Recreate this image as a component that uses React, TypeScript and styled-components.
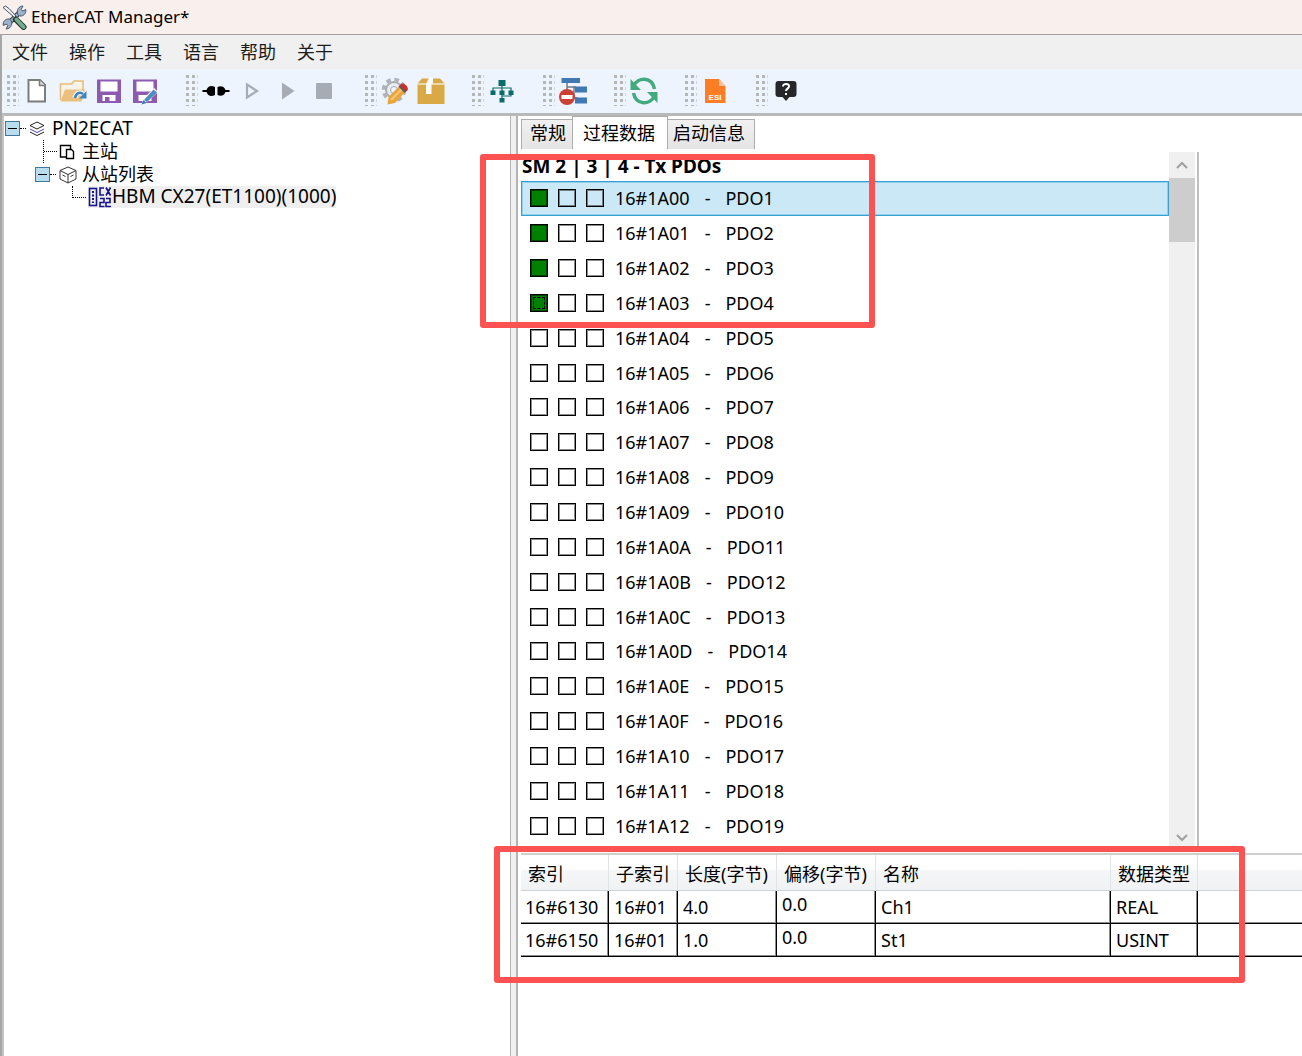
import React, { useState } from "react";
import styled, { createGlobalStyle, css } from "styled-components";

const GlobalStyle = createGlobalStyle`
  *, *::before, *::after { box-sizing: border-box; }
  body {
    margin: 0;
    background: #fff;
    color: #000;
    font-family: "Noto Sans", "Noto Sans CJK SC", sans-serif;
    font-size: 18px;
    line-height: 24px;
  }
  button, input { font: inherit; color: inherit; }
  button { margin: 0; padding: 0; border: 0; background: none; }
  h1, h2, ul { margin: 0; padding: 0; font-weight: 400; list-style: none; }
`;

const Window = styled.div`
  display: flex;
  flex-direction: column;
  min-height: 100vh;
`;

const TitleBar = styled.header`
  display: flex;
  align-items: center;
  gap: 4px;
  height: 34px;
  padding-left: 2px;
  background: #f9f0ee;
`;

const Title = styled.h1`
  font-size: 17px;
  line-height: 24px;
`;

const Frame = styled.div`
  display: flex;
  flex: 1;
  flex-direction: column;
  border-top: 1px solid #a0a0a0;
  border-left: 2px solid #a6a6a6;
`;

const MenuBar = styled.nav`
  display: flex;
  gap: 21px;
  height: 34px;
  padding-left: 10px;
  background: #f0f0f0;
`;

const MenuItem = styled.button`
  color: #1c1c1c;
`;

const Toolbar = styled.div`
  display: flex;
  gap: 22px;
  height: 44px;
  padding-left: 4px;
  background: #edf4fd;
`;

const ToolGroup = styled.div`
  display: flex;
  align-items: center;
`;

const ToolButton = styled.button`
  display: flex;
  align-items: center;
  justify-content: center;
  width: 36px;
  height: 36px;
`;

const Workspace = styled.main`
  display: flex;
  flex: 1;
  border-top: 3px solid #b9b9b9;
  border-left: 2px solid #c4c4c4;
`;

const TreePane = styled.nav`
  flex: 0 0 506px;
  padding: 1px 0 0 1px;
`;

const TreeRow = styled.li<{ $indent: number }>`
  display: flex;
  align-items: center;
  height: 23px;
  padding-left: ${(p) => p.$indent}px;
`;

const Expander = styled.button`
  display: flex;
  align-items: center;
  justify-content: center;
  width: 15px;
  height: 15px;
  border: 1px solid #3f789c;
  background: #b9dcee;
  &::before {
    content: "";
    width: 9px;
    height: 1px;
    background: #000;
  }
`;

const Dots = styled.span`
  width: 6px;
  margin-right: 3px;
  border-top: 1px dotted #000;
`;

const Elbow = styled.span<{ $through?: boolean }>`
  align-self: stretch;
  width: 14px;
  margin-right: 2px;
  ${(p) =>
    p.$through
      ? css`
          display: flex;
          align-items: center;
          border-left: 1px dotted #000;
          &::before {
            content: "";
            flex: 1;
            border-top: 1px dotted #000;
          }
        `
      : css`
          height: 12px;
          border-left: 1px dotted #000;
          border-bottom: 1px dotted #000;
        `}
`;

const TreeIcon = styled.span<{ $width: number }>`
  display: flex;
  align-items: center;
  justify-content: center;
  width: ${(p) => p.$width}px;
`;

const TreeLabel = styled.span<{ $gap?: number; $latin?: boolean }>`
  padding: 0 0 2px ${(p) => p.$gap ?? 0}px;
  font-size: ${(p) => (p.$latin ? 19 : 18)}px;
  white-space: nowrap;
`;

const SelectedNode = styled.span`
  display: flex;
  align-items: center;
  align-self: flex-start;
  height: 22px;
  background: #efefef;
`;

const Splitter = styled.div`
  flex: 0 0 8px;
  border: solid #b4b4b4;
  border-width: 0 2px 0 1px;
  background: #f0f0f0;
`;

const Detail = styled.section`
  position: relative;
  flex: 1;
  min-width: 0;
  padding-left: 3px;
`;

const TabList = styled.div`
  display: flex;
  align-items: flex-end;
  height: 33px;
`;

const Tab = styled.button<{ $active: boolean }>`
  height: ${(p) => (p.$active ? 33 : 30)}px;
  padding: ${(p) => (p.$active ? "0 12px 0 10px" : "0 6px 3px 8px")};
  border: solid #acacac;
  border-width: 1px 1px 0;
  background: ${(p) => (p.$active ? "#fff" : "linear-gradient(#f1f1f1, #e4e4e4)")};
  &:first-child { border-right: 0; }
  &:last-child { padding: 0 9px 3px 5px; border-left: 0; }
`;

const PdoPanel = styled.div`
  display: flex;
  width: calc(100% - 103px);
  height: 699px;
  margin-top: 3px;
  border-right: 2px solid #c0c0c0;
`;

const PdoColumn = styled.div`
  flex: 1;
  min-width: 0;
`;

const PdoHeading = styled.h2`
  height: 29px;
  padding-left: 1px;
  font-size: 19px;
  line-height: 29px;
  font-weight: 700;
`;

const PdoList = styled.ul`
  display: grid;
  grid-auto-rows: 1fr;
  height: 662px;
`;

const PdoRow = styled.li<{ $selected: boolean }>`
  display: flex;
  align-items: center;
  padding-left: 8px;
  border: 1px solid ${(p) => (p.$selected ? "#36a0d6" : "transparent")};
  background: ${(p) => (p.$selected ? "#cbe8f6" : "transparent")};
  ${(p) => p.$selected && "box-shadow: inset 0 0 0 1px #93d0ec;"}
`;

const SyncBox = styled.input`
  appearance: none;
  display: grid;
  width: 18px;
  height: 18px;
  margin: 0 10px 0 0;
  border: 1px solid #000;
  box-shadow: inset 0 0 0 1px rgba(0, 0, 0, 0.45);
  &:checked { background: #008000; }
`;

const FocusedBox = styled(SyncBox)`
  &::before {
    content: "";
    margin: 2px;
    border: 1px dashed #000;
  }
`;

const PdoName = styled.span`
  display: flex;
  gap: 15px;
  padding-left: 1px;
`;

const ScrollBar = styled.div`
  display: flex;
  flex-direction: column;
  width: 26px;
  margin-right: 2px;
  background: #f0f0f0;
`;

const ScrollArrow = styled.button`
  display: flex;
  align-items: center;
  justify-content: center;
  height: 26px;
`;

const ScrollTrack = styled.div`
  flex: 1;
`;

const ScrollThumb = styled.div`
  height: 64px;
  background: #cdcdcd;
`;

const EntryTable = styled.table`
  width: 100%;
  margin-top: 2px;
  border-top: 2px solid #d0d0d0;
  border-spacing: 0;
  table-layout: fixed;
`;

const HeadCell = styled.th`
  height: 36px;
  padding: 2px 0 0 7px;
  border-right: 1px solid #e2e3e5;
  border-bottom: 1px solid #d0d1d3;
  background: linear-gradient(#fff 0 42%, #f5f6f8 42%, #f1f2f4);
  font-weight: 400;
  text-align: left;
  white-space: nowrap;
  &:last-child { border-right: 0; }
`;

const Cell = styled.td<{ $top?: boolean }>`
  height: 33px;
  padding: ${(p) => (p.$top ? 1 : 0)}px 0 0 5px;
  border-right: 1px solid #000;
  border-bottom: 1px solid #000;
  box-shadow: inset -1px -1px #8c8c8c;
  vertical-align: ${(p) => (p.$top ? "top" : "middle")};
  white-space: nowrap;
  &:first-child { padding-left: 4px; }
  &:last-child { border-right: 0; box-shadow: inset 0 -1px #8c8c8c; }
`;

const Callout = styled.div<{ $top: number; $left: number; $width: number; $height: number }>`
  position: absolute;
  top: ${(p) => p.$top}px;
  left: ${(p) => p.$left}px;
  width: ${(p) => p.$width}px;
  height: ${(p) => p.$height}px;
  border: 6px solid #fc5252;
  border-radius: 3px;
  pointer-events: none;
`;

const AppIcon = () => (
  <svg width="25" height="25" viewBox="0 0 25 25" fill="none" aria-hidden="true">
    <path d="M6 19L18 7" stroke="#2c333c" strokeWidth="5" />
    <path d="M5 20L19 6" stroke="#9db2ca" strokeWidth="3" />
    <path d="M15.500 9c-1-4.500 1.500-8 5.500-8l-1.800 3.300 1.500 1.700 3-1.500c.8 4-2.200 7-6.200 6.500z" fill="#9db2ca" stroke="#4b586a" />
    <path d="M9.500 16c1 4.500-1.500 8-5.500 8l1.800-3.300-1.500-1.700-3 1.500c-.8-4 2.200-7 6.200-6.500z" fill="#9db2ca" stroke="#4b586a" />
    <path d="M1 2.500l2.500-1.500 3.500 2.500L14 11l-1.500 1.500L5 6z" fill="#e8eef2" stroke="#4b586a" />
    <path d="M14 14.500l7.500 7.500" stroke="#24362d" strokeWidth="6" strokeLinecap="round" />
    <path d="M14.500 14.500l7 7.500" stroke="#75ab8e" strokeWidth="4" strokeLinecap="round" />
  </svg>
);

const Grip = () => (
  <svg width="13" height="32" viewBox="0 0 13 32" fill="#b4b6b8" aria-hidden="true">
    {[0, 6, 12, 18, 24, 30].map((y) => (
      <React.Fragment key={y}>
        <rect x="1" y={y} width="3" height={y === 30 ? 1 : 3} />
        <rect x="7" y={y} width="3" height={y === 30 ? 1 : 3} />
        <rect x="12" y={y} width="1" height={y === 30 ? 1 : 3} opacity="0.5" />
      </React.Fragment>
    ))}
  </svg>
);

const toolIcons = {
  new: (
    <svg width="26" height="28" viewBox="0 0 26 28">
      <path d="M4.500 3h11.500l5 5v16.500h-16.500z" fill="#fff" stroke="#7b7d7b" strokeWidth="2" />
      <path d="M15.500 3v5.500h5.500" fill="#ddd" stroke="#7b7d7b" strokeWidth="1.600" />
    </svg>
  ),
  open: (
    <svg width="28" height="28" viewBox="0 0 28 28">
      <path d="M1.500 23V7h11l2.500-3h9v10" fill="#f7f3ea" stroke="#e9bd77" strokeWidth="1.600" />
      <path d="M1.500 24.500L6 12.500h20l-3.500 12z" fill="#ebc07c" />
      <path d="M16 21c1-5 5-6.500 8-4" fill="none" stroke="#edf4fd" strokeWidth="5" />
      <path d="M16 21c1-5 5-6.500 8-4" fill="none" stroke="#3f83b9" strokeWidth="2.600" />
      <path d="M27.500 14v7.500H20z" fill="#3f83b9" />
    </svg>
  ),
  save: (
    <svg width="26" height="28" viewBox="0 0 26 28">
      <path d="M1 2.500h24v23.500h-24z" fill="#8c5ab0" />
      <path d="M4.500 4.500h17v10h-17zM6.500 18h13v6h-13z" fill="#fff" />
      <path d="M9 20h4.500v4.500h-4.500z" fill="#8c5ab0" />
    </svg>
  ),
  saveAs: (
    <svg width="26" height="28" viewBox="0 0 26 28">
      <path d="M1 2.500h24v23.500h-24z" fill="#8c5ab0" />
      <path d="M4.500 4.500h17v10h-17zM6.500 18h13v6h-13z" fill="#fff" />
      <path d="M11 22L22 11l4 4-11 10-5 2z" fill="#fff" />
      <path d="M12 23L21.500 12.500l3.500 3L15 25z" fill="#4b8cc1" />
      <path d="M9.500 27.500l2-4.500 3 3z" fill="#3578ad" />
    </svg>
  ),
  connect: (
    <svg width="28" height="12" viewBox="0 0 28 12">
      <path d="M0.500 5h4C6 1 9 0 13 2v8c-4 2-7 1-8.500-3h-4zM15.500 2c4-2 7 0 8 3h4v2h-4c-1 3-4 5-8 3z" fill="#000" />
    </svg>
  ),
  step: (
    <svg width="16" height="18" viewBox="0 0 16 18">
      <path d="M3 2.500l10 6.500-10 6.500z" fill="none" stroke="#a7abb3" strokeWidth="2.200" />
    </svg>
  ),
  play: (
    <svg width="14" height="18" viewBox="0 0 14 18">
      <path d="M1 0.500l12.500 8.500-12.500 8.500z" fill="#a7abb3" />
    </svg>
  ),
  stop: (
    <svg width="16" height="16" viewBox="0 0 16 16">
      <rect width="16" height="16" rx="1" fill="#a7abb3" />
    </svg>
  ),
  configure: (
    <svg width="28" height="28" viewBox="0 0 28 28">
      <circle cx="13" cy="13" r="10.500" fill="none" stroke="#b0b4ba" strokeWidth="3.600" strokeDasharray="4.700 3.550" />
      <circle cx="13" cy="13" r="8" fill="#e9edf2" stroke="#a8adb4" strokeWidth="2" />
      <circle cx="13" cy="13" r="3.500" fill="#edf4fd" stroke="#a8adb4" />
      <path d="M7.500 20L19 8.500l6 6L14 26l-7.500 1.500z" fill="#e9a63c" />
      <path d="M10 23L21 12" stroke="#f7c873" strokeWidth="2" />
      <path d="M17.500 9.500l2-2 6.500 6-2.500 2.500z" fill="#5b5b5b" />
      <path d="M19.500 7.500c2-3 9 2 7 6l-1.500 1-6-6z" fill="#c9302c" />
    </svg>
  ),
  package: (
    <svg width="28" height="28" viewBox="0 0 28 28">
      <path d="M5 1.500h7v5h-11.500zM16 1.500h7l4.500 5h-11.500zM.5 7.500h27v19.500h-27z" fill="#d9a945" />
      <path d="M12 1h4l-1.500 6v10h-5.500v-10z" fill="#fff" />
      <path d="M.5 7h9M14.500 7h13" stroke="#f5e2b4" />
    </svg>
  ),
  network: (
    <svg width="24" height="24" viewBox="0 0 24 24">
      <path d="M12 5v14M3 13v-4h18v4M21 13v4h-9" fill="none" stroke="#0b6b6b" strokeWidth="1.200" />
      <path d="M8.500 1h7v6h-7zM.5 11.500h5v4.500h-5zM9.500 11.500h5v4.500h-5zM18.500 11.500h5v4.500h-5zM9.500 19h5v4.500h-5z" fill="#0b6b6b" />
    </svg>
  ),
  detach: (
    <svg width="28" height="28" viewBox="0 0 28 28">
      <path d="M8 5v9M8 10h9M15 9v12h4" fill="none" stroke="#6f7b86" strokeWidth="1.500" />
      <path d="M2.500 1h18.500v5h-18.500zM16 9.500h12v6h-12zM16 20.500h12v6h-12z" fill="#3f79b4" />
      <circle cx="8" cy="20" r="8" fill="#cb4134" />
      <rect x="2.500" y="18" width="11" height="4" fill="#fff" />
    </svg>
  ),
  refresh: (
    <svg width="28" height="28" viewBox="0 0 28 28">
      <path d="M3.500 9C8-.5 22-.5 24.500 12" fill="none" stroke="#43aa7d" strokeWidth="3.600" />
      <path d="M24.500 19C20 28.500 6 28.500 3.500 16" fill="none" stroke="#43aa7d" strokeWidth="3.600" />
      <path d="M.5 2v11h10.500zM27.500 26V15H17z" fill="#43aa7d" />
    </svg>
  ),
  esi: (
    <svg width="22" height="26" viewBox="0 0 22 26">
      <path d="M1 1h14l6.500 7v17h-20.500z" fill="#fc7d24" />
      <path d="M15 1l6.500 7h-6.500z" fill="#fcc39a" />
      <text x="11" y="22" textAnchor="middle" fontFamily="Liberation Sans, sans-serif" fontSize="8" fontWeight="700" fill="#fff">ESI</text>
    </svg>
  ),
  help: (
    <svg width="22" height="22" viewBox="0 0 22 22">
      <path d="M3.500 1h15q3 0 3 3v10q0 3-3 3h-4l-3.500 4-3.500-4h-4q-3 0-3-3v-10q0-3 3-3z" fill="#25272a" />
      <path d="M8 6.500c0-3.500 6.500-3.500 6 .2-.3 2-3 2-3 4.300M11 13v2" fill="none" stroke="#fff" strokeWidth="2" />
    </svg>
  ),
};

type ToolName = keyof typeof toolIcons;

const toolGroups: [ToolName, string][][] = [
  [["new", "新建"], ["open", "打开"], ["save", "保存"], ["saveAs", "另存为"]],
  [["connect", "连接"], ["step", "单步"], ["play", "运行"], ["stop", "停止"]],
  [["configure", "配置"], ["package", "打包"]],
  [["network", "拓扑"]],
  [["detach", "移除"]],
  [["refresh", "刷新"]],
  [["esi", "ESI"]],
  [["help", "帮助"]],
];

const LayersIcon = () => (
  <svg width="16" height="16" viewBox="0 0 16 16" fill="none" stroke="#222" aria-hidden="true">
    <path d="M8 1l7 3.500-7 3.500-7-3.500z" />
    <path d="M1 8l7 3.500 7-3.500" stroke="#4a4ab8" />
    <path d="M1 11l7 3.500 7-3.500" />
  </svg>
);

const MasterIcon = () => (
  <svg width="16" height="16" viewBox="0 0 16 16" fill="none" stroke="#000" strokeWidth="1.400" aria-hidden="true">
    <path d="M7 13H1.500V1.500h10V5" />
    <path d="M7.500 5.500h5l2 2v7h-7z" />
  </svg>
);

const BoxIcon = () => (
  <svg width="18" height="18" viewBox="0 0 18 18" fill="none" stroke="#333" aria-hidden="true">
    <path d="M9 1l8 3.500v8.500l-8 4-8-4v-8.500zM1 4.500l8 4 8-4M9 8.500v8.500M3.500 9l3 1.500M11.500 10.500l3-1.500" />
  </svg>
);

const DeviceIcon = () => (
  <svg width="24" height="22" viewBox="0 0 24 22" fill="none" stroke="#14148c" aria-hidden="true">
    <rect x="1.500" y="2.500" width="7" height="17" strokeWidth="1.600" />
    <path d="M5 5v12" strokeWidth="2" strokeDasharray="2 1.500" />
    <path d="M16 2h-4v7h4M18 1.500l4.500 8M22.500 1.500L18 9.500" strokeWidth="1.600" />
    <path d="M12 12.500h4v4h-4v4h4.500M18 12.500h4v4h-4v4h5" strokeWidth="1.600" />
  </svg>
);

const Chevron = ({ down }: { down?: boolean }) => (
  <svg width="12" height="8" viewBox="0 0 12 8" fill="none" stroke="#a0a0a0" strokeWidth="2" aria-hidden="true">
    <path d={down ? "M1 1l5 5 5-5" : "M1 7l5-5 5 5"} />
  </svg>
);

const pdos = Array.from({ length: 19 }, (_, i) => ({
  index: `16#1A${i.toString(16).toUpperCase().padStart(2, "0")}`,
  name: `PDO${i + 1}`,
  mapped: i < 4,
}));

const columns = [
  { title: "索引", width: 88 },
  { title: "子索引", width: 69 },
  { title: "长度(字节)", width: 99 },
  { title: "偏移(字节)", width: 99 },
  { title: "名称", width: 235 },
  { title: "数据类型", width: 87 },
];

const entries = [
  ["16#6130", "16#01", "4.0", "0.0", "Ch1", "REAL"],
  ["16#6150", "16#01", "1.0", "0.0", "St1", "USINT"],
];

const Column = styled.col<{ $width?: number }>`
  width: ${(p) => (p.$width ? `${p.$width}px` : "auto")};
`;

export default function App() {
  const [tab, setTab] = useState(1);
  const [selected, setSelected] = useState(0);

  return (
    <>
      <GlobalStyle />
      <Window>
        <TitleBar>
          <AppIcon />
          <Title>EtherCAT Manager*</Title>
        </TitleBar>
        <Frame>
          <MenuBar>
            {["文件", "操作", "工具", "语言", "帮助", "关于"].map((m) => (
              <MenuItem key={m}>{m}</MenuItem>
            ))}
          </MenuBar>
          <Toolbar role="toolbar">
            {toolGroups.map((group) => (
              <ToolGroup key={group[0][0]}>
                <Grip />
                {group.map(([icon, label]) => (
                  <ToolButton key={icon} aria-label={label}>
                    {toolIcons[icon]}
                  </ToolButton>
                ))}
              </ToolGroup>
            ))}
          </Toolbar>
          <Workspace>
            <TreePane>
              <ul>
                <TreeRow $indent={0}>
                  <Expander aria-label="PN2ECAT" />
                  <Dots />
                  <TreeIcon $width={16}><LayersIcon /></TreeIcon>
                  <TreeLabel $gap={7} $latin>PN2ECAT</TreeLabel>
                </TreeRow>
                <TreeRow $indent={38}>
                  <Elbow $through />
                  <TreeIcon $width={16}><MasterIcon /></TreeIcon>
                  <TreeLabel $gap={7}>主站</TreeLabel>
                </TreeRow>
                <TreeRow $indent={30}>
                  <Expander aria-label="从站列表" />
                  <Dots />
                  <TreeIcon $width={18}><BoxIcon /></TreeIcon>
                  <TreeLabel $gap={5}>从站列表</TreeLabel>
                </TreeRow>
                <TreeRow $indent={67}>
                  <Elbow />
                  <SelectedNode>
                    <TreeIcon $width={24}><DeviceIcon /></TreeIcon>
                    <TreeLabel $latin>HBM CX27(ET1100)(1000)</TreeLabel>
                  </SelectedNode>
                </TreeRow>
              </ul>
            </TreePane>
            <Splitter />
            <Detail>
              <TabList role="tablist">
                {["常规", "过程数据", "启动信息"].map((t, i) => (
                  <Tab key={t} role="tab" aria-selected={tab === i} $active={tab === i} onClick={() => setTab(i)}>
                    {t}
                  </Tab>
                ))}
              </TabList>
              <PdoPanel>
                <PdoColumn>
                  <PdoHeading>SM 2 | 3 | 4 - Tx PDOs</PdoHeading>
                  <PdoList>
                    {pdos.map((pdo, i) => {
                      const First = i === 3 ? FocusedBox : SyncBox;
                      return (
                        <PdoRow key={pdo.index} $selected={selected === i} onClick={() => setSelected(i)}>
                          <First type="checkbox" defaultChecked={pdo.mapped} aria-label={`${pdo.name} SM 2`} />
                          <SyncBox type="checkbox" aria-label={`${pdo.name} SM 3`} />
                          <SyncBox type="checkbox" aria-label={`${pdo.name} SM 4`} />
                          <PdoName>
                            <span>{pdo.index}</span>
                            <span>-</span>
                            <span>{pdo.name}</span>
                          </PdoName>
                        </PdoRow>
                      );
                    })}
                  </PdoList>
                </PdoColumn>
                <ScrollBar>
                  <ScrollArrow aria-label="向上滚动"><Chevron /></ScrollArrow>
                  <ScrollTrack><ScrollThumb /></ScrollTrack>
                  <ScrollArrow aria-label="向下滚动"><Chevron down /></ScrollArrow>
                </ScrollBar>
              </PdoPanel>
              <EntryTable>
                <colgroup>
                  {columns.map((c) => <Column key={c.title} $width={c.width} />)}
                  <Column />
                </colgroup>
                <thead>
                  <tr>
                    {columns.map((c) => <HeadCell key={c.title}>{c.title}</HeadCell>)}
                    <HeadCell />
                  </tr>
                </thead>
                <tbody>
                  {entries.map((row) => (
                    <tr key={row[0]}>
                      {row.map((value, i) => <Cell key={i} $top={i === 3}>{value}</Cell>)}
                      <Cell />
                    </tr>
                  ))}
                </tbody>
              </EntryTable>
              <Callout $top={38} $left={-38} $width={395} $height={174} />
              <Callout $top={730} $left={-24} $width={751} $height={137} />
            </Detail>
          </Workspace>
        </Frame>
      </Window>
    </>
  );
}
